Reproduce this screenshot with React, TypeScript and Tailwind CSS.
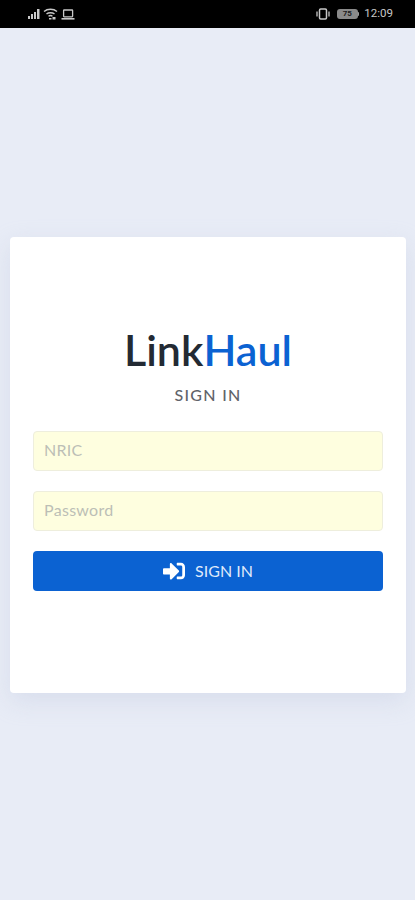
import { FaSignInAlt } from "react-icons/fa";

function StatusBar() {
  return (
    <div className="flex h-[28px] items-center justify-between bg-black pl-[28px] pr-[22px] text-[#c8c8c8]">
      <div className="flex items-center gap-[3px]">
        <svg width="12" height="10" viewBox="0 0 12 10" fill="currentColor">
          <path d="M0 7h2v3H0zM3 5h2v5H3zM6 3h2v7H6zM9 0h2.5v10H9z" />
        </svg>
        <svg width="15" height="12" viewBox="0 0 15 12" fill="none" stroke="currentColor" strokeWidth="1.4">
          <path d="M1 3.5C4.5 .5 10.5 .5 14 3.5" />
          <path d="M3.5 6C5.5 4.3 9.5 4.3 11.5 6" />
          <path d="M5.5 8.2C6.6 7.4 8.4 7.4 9.5 8.2" />
          <rect x="9.5" y="9" width="3" height="2.5" fill="currentColor" stroke="none" />
          <rect x="6" y="10" width="2.5" height="1.5" fill="currentColor" stroke="none" />
        </svg>
        <svg width="14" height="11" viewBox="0 0 14 11" fill="none" stroke="currentColor" strokeWidth="1.3">
          <rect x="2.6" y="1" width="9" height="6.8" rx="0.5" />
          <path d="M0.5 9.8H13.5" strokeWidth="1.6" />
        </svg>
      </div>
      <div className="flex items-center gap-[4px]">
        <svg width="14" height="12" viewBox="0 0 14 12" fill="none" stroke="currentColor">
          <rect x="3.5" y="1" width="7" height="10" rx="1.2" strokeWidth="1.5" />
          <path d="M1 3.5V8.5M13 3.5V8.5" strokeWidth="1.3" />
        </svg>
        <div className="ml-[3px] flex items-center">
          <div className="flex h-[10px] w-[21px] items-center justify-center rounded-[3px] bg-[#8a8a8a] font-['Roboto',sans-serif] text-[8px] font-bold leading-none text-[#1c1c1c]">
            75
          </div>
          <div className="h-[4px] w-[1.5px] rounded-r-sm bg-[#9a9a9a]" />
        </div>
        <span className="ml-[1px] font-['Roboto',sans-serif] text-[11.5px] leading-none">12:09</span>
      </div>
    </div>
  );
}

function Field({ placeholder, type }: { placeholder: string; type: string }) {
  return (
    <input
      type={type}
      placeholder={placeholder}
      className="block h-[40px] w-full rounded-[4px] border border-[#eeeedd] bg-[#fefedf] px-[10px] pb-[3px] text-[16px] tracking-[0.3px] text-[#495057] outline-none placeholder:text-[#bcbeb6]"
    />
  );
}

export default function App() {
  return (
    <div className="min-h-[900px] bg-[#e8ecf6] font-['Lato','Noto_Sans',sans-serif]">
      <StatusBar />
      <main className="pl-[10px] pr-[9px] pt-[209px]">
        <div className="h-[456px] rounded-[4px] bg-white px-[23px] pt-[89px] shadow-[0_8px_24px_rgba(180,188,215,0.3)]">
          <h1 className="text-center text-[43px] font-semibold leading-[48px] text-[#232a33]">
            Link<span className="text-[#0b62d2]">Haul</span>
          </h1>
          <p className="mt-[11px] text-center text-[16px] font-medium leading-[20px] tracking-[1.3px] text-[#5f6369]">SIGN IN</p>
          <form className="mt-[26px] flex flex-col gap-[20px]">
            <Field placeholder="NRIC" type="text" />
            <Field placeholder="Password" type="password" />
            <button
              type="button"
              className="flex h-[40px] items-center justify-center gap-[10px] rounded-[4px] bg-[#0b62d2] pb-[1px] text-[16px] text-[#dfe9fa]"
            >
              <FaSignInAlt className="size-[22px] text-white" />
              SIGN IN
            </button>
          </form>
        </div>
      </main>
    </div>
  );
}
